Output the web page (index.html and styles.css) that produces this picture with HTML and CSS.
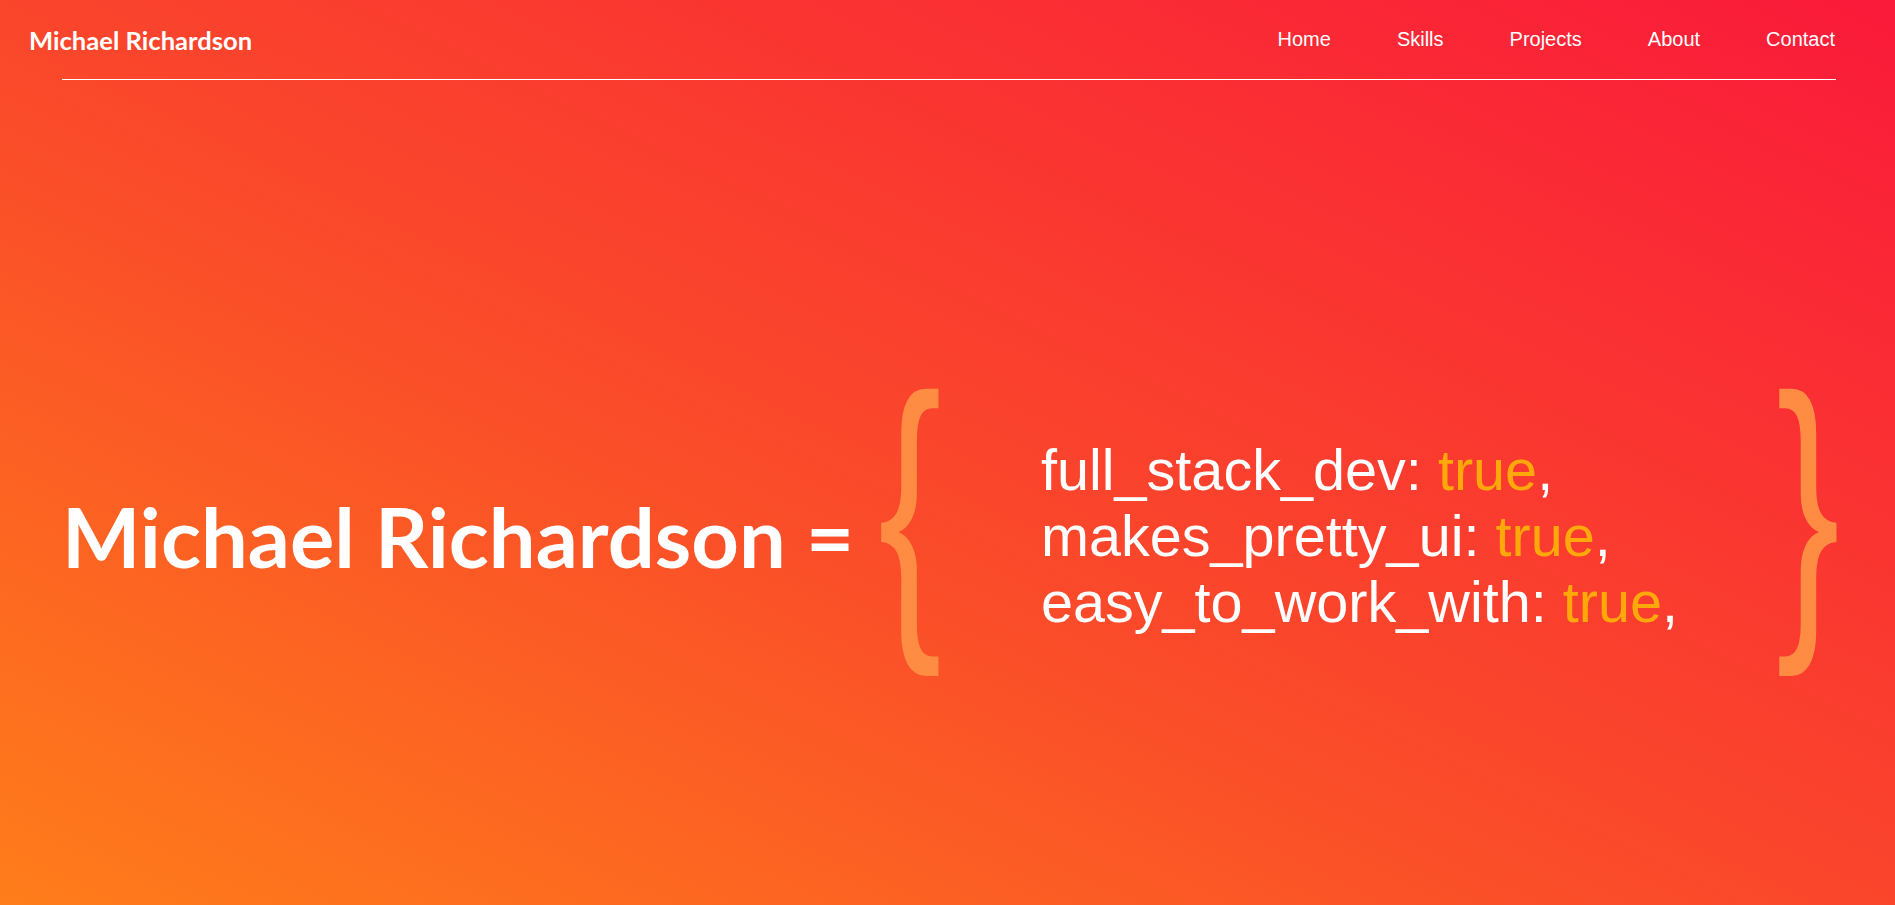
FILE: index.html
```html
<!DOCTYPE html>
<html lang="en">
<head>
<meta charset="utf-8">
<title>Michael Richardson</title>
<link rel="stylesheet" href="styles.css">
</head>
<body>
<div class="page">
  <header class="topbar">
    <a class="logo" href="#">Michael Richardson</a>
    <nav class="nav">
      <a href="#">Home</a>
      <a href="#">Skills</a>
      <a href="#">Projects</a>
      <a href="#">About</a>
      <a href="#">Contact</a>
    </nav>
  </header>
  <div class="rule"></div>
  <main class="hero">
    <h1 class="name">Michael Richardson =</h1>
    <div class="object">
      <span class="brace brace-open">{</span>
      <div class="props">
        <div>full_stack_dev: <span class="val">true</span>,</div>
        <div>makes_pretty_ui: <span class="val">true</span>,</div>
        <div>easy_to_work_with: <span class="val">true</span>,</div>
      </div>
      <span class="brace brace-close">}</span>
    </div>
  </main>
</div>
</body>
</html>
```
FILE: styles.css
```css
html, body {
  margin: 0;
  padding: 0;
}
body {
  width: 1895px;
  height: 905px;
  overflow: hidden;
  color: #fff;
  font-family: "Liberation Sans", Arial, sans-serif;
  background: linear-gradient(to top right, #ff7d1a 0%, #fa4a2a 45%, #fa1a3a 100%);
}
.page {
  height: 905px;
  display: flex;
  flex-direction: column;
}
.topbar {
  height: 79px;
  display: flex;
  align-items: center;
  justify-content: space-between;
  padding: 0 27px 0 29px;
}
.logo {
  font-family: "Lato", "Open Sans", sans-serif;
  font-weight: 700;
  font-size: 25.6px;
  color: #fff;
  text-decoration: none;
}
.nav {
  display: flex;
}
.nav a {
  color: #fff;
  text-decoration: none;
  font-size: 20px;
  padding: 0 33px;
}
.rule {
  height: 1px;
  background: #fff;
  margin: 0 59px 0 62px;
}
.hero {
  flex: 1;
  display: flex;
  align-items: center;
  padding: 86px 55px 0 62px;
}
.name {
  margin: 0;
  font-family: "Lato", "Open Sans", sans-serif;
  font-weight: 700;
  font-size: 83px;
  white-space: nowrap;
}
.object {
  flex: 1;
  display: flex;
  align-items: center;
  margin-left: 24px;
}
.brace {
  display: inline-block;
  font-family: "Liberation Sans", sans-serif;
  font-size: 308px;
  line-height: 1;
  color: #ff8c42;
  margin-bottom: 62px;
  transform: scaleX(0.62);
}
.brace-open {
  transform-origin: left center;
}
.brace-close {
  transform-origin: right center;
}
.props {
  flex: 1;
  padding-left: 60px;
  font-size: 57.6px;
  line-height: 66px;
}
.val {
  color: #ffa80a;
}
```
